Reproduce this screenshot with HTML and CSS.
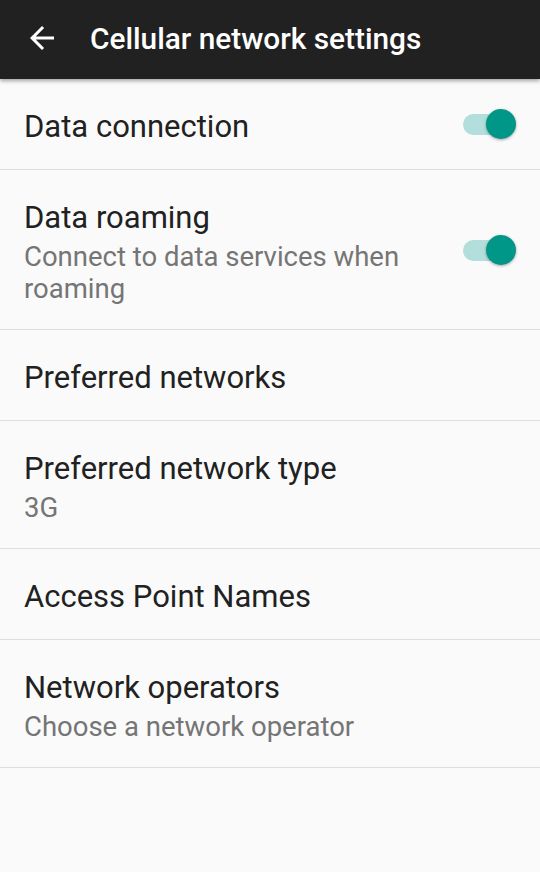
FILE: index.html
```html
<!DOCTYPE html>
<html lang="en">

<head>
  <meta charset="UTF-8">
  <meta name="viewport" content="width=device-width, initial-scale=1.0">
  <title>Cellular network settings</title>
  <link rel="stylesheet" href="styles.css">
</head>

<body>
  <header class="toolbar">
    <svg class="back-icon" width="36" height="36" viewBox="0 0 24 24">
      <path d="M20 11H7.83l5.59-5.59L12 4l-8 8 8 8 1.41-1.41L7.83 13H20v-2z" fill="#fff" />
    </svg>
    <h1>Cellular network settings</h1>
  </header>

  <ul class="pref-list">
    <li class="pref">
      <div class="pref-text">
        <div class="pref-title">Data connection</div>
      </div>
      <div class="switch on"><span class="track"></span><span class="thumb"></span></div>
    </li>
    <li class="pref">
      <div class="pref-text">
        <div class="pref-title">Data roaming</div>
        <div class="pref-summary">Connect to data services when roaming</div>
      </div>
      <div class="switch on"><span class="track"></span><span class="thumb"></span></div>
    </li>
    <li class="pref">
      <div class="pref-text">
        <div class="pref-title">Preferred networks</div>
      </div>
    </li>
    <li class="pref">
      <div class="pref-text">
        <div class="pref-title">Preferred network type</div>
        <div class="pref-summary">3G</div>
      </div>
    </li>
    <li class="pref">
      <div class="pref-text">
        <div class="pref-title">Access Point Names</div>
      </div>
    </li>
    <li class="pref">
      <div class="pref-text">
        <div class="pref-title">Network operators</div>
        <div class="pref-summary">Choose a network operator</div>
      </div>
    </li>
  </ul>
</body>

</html>
```

FILE: styles.css
```css
/* styles.css */
body {
  font-family: Roboto, "Noto Sans", sans-serif;
  background-color: #fafafa;
  margin: 0;
}

.toolbar {
  position: relative;
  z-index: 1;
  display: flex;
  align-items: center;
  height: 79px;
  padding: 0 24px;
  background-color: #212121;
  box-shadow: 0 2px 4px rgba(0, 0, 0, 0.35);
}

.back-icon {
  display: block;
  margin-top: -4px;
}

.toolbar h1 {
  margin: -2px 0 0 30px;
  color: #fff;
  font-size: 29.8px;
  font-weight: 500;
  line-height: 36px;
}

.pref-list {
  list-style: none;
  margin: 0;
  padding: 0;
}

.pref {
  display: flex;
  align-items: center;
  min-height: 89px;
  padding: 0 24px;
  border-bottom: 1px solid #dedede;
}

.pref:first-child {
  min-height: 90px;
}

.pref-text {
  flex: 1;
  padding: 29px 40px 24px 0;
}

.pref-title {
  color: #212121;
  font-size: 31px;
  line-height: 37px;
}

.pref-summary {
  margin-top: 5px;
  color: #757575;
  font-size: 27.5px;
  line-height: 32px;
}

.switch {
  position: relative;
  flex: none;
  width: 53px;
  height: 30px;
}

.switch .track {
  position: absolute;
  left: 0;
  top: 5px;
  width: 50px;
  height: 21px;
  border-radius: 11px;
  background-color: #b2dfdb;
}

.switch .thumb {
  position: absolute;
  right: 0;
  top: 0;
  width: 30px;
  height: 30px;
  border-radius: 50%;
  background-color: #009688;
  box-shadow: 0 1px 3px rgba(0, 0, 0, 0.35);
}
```
